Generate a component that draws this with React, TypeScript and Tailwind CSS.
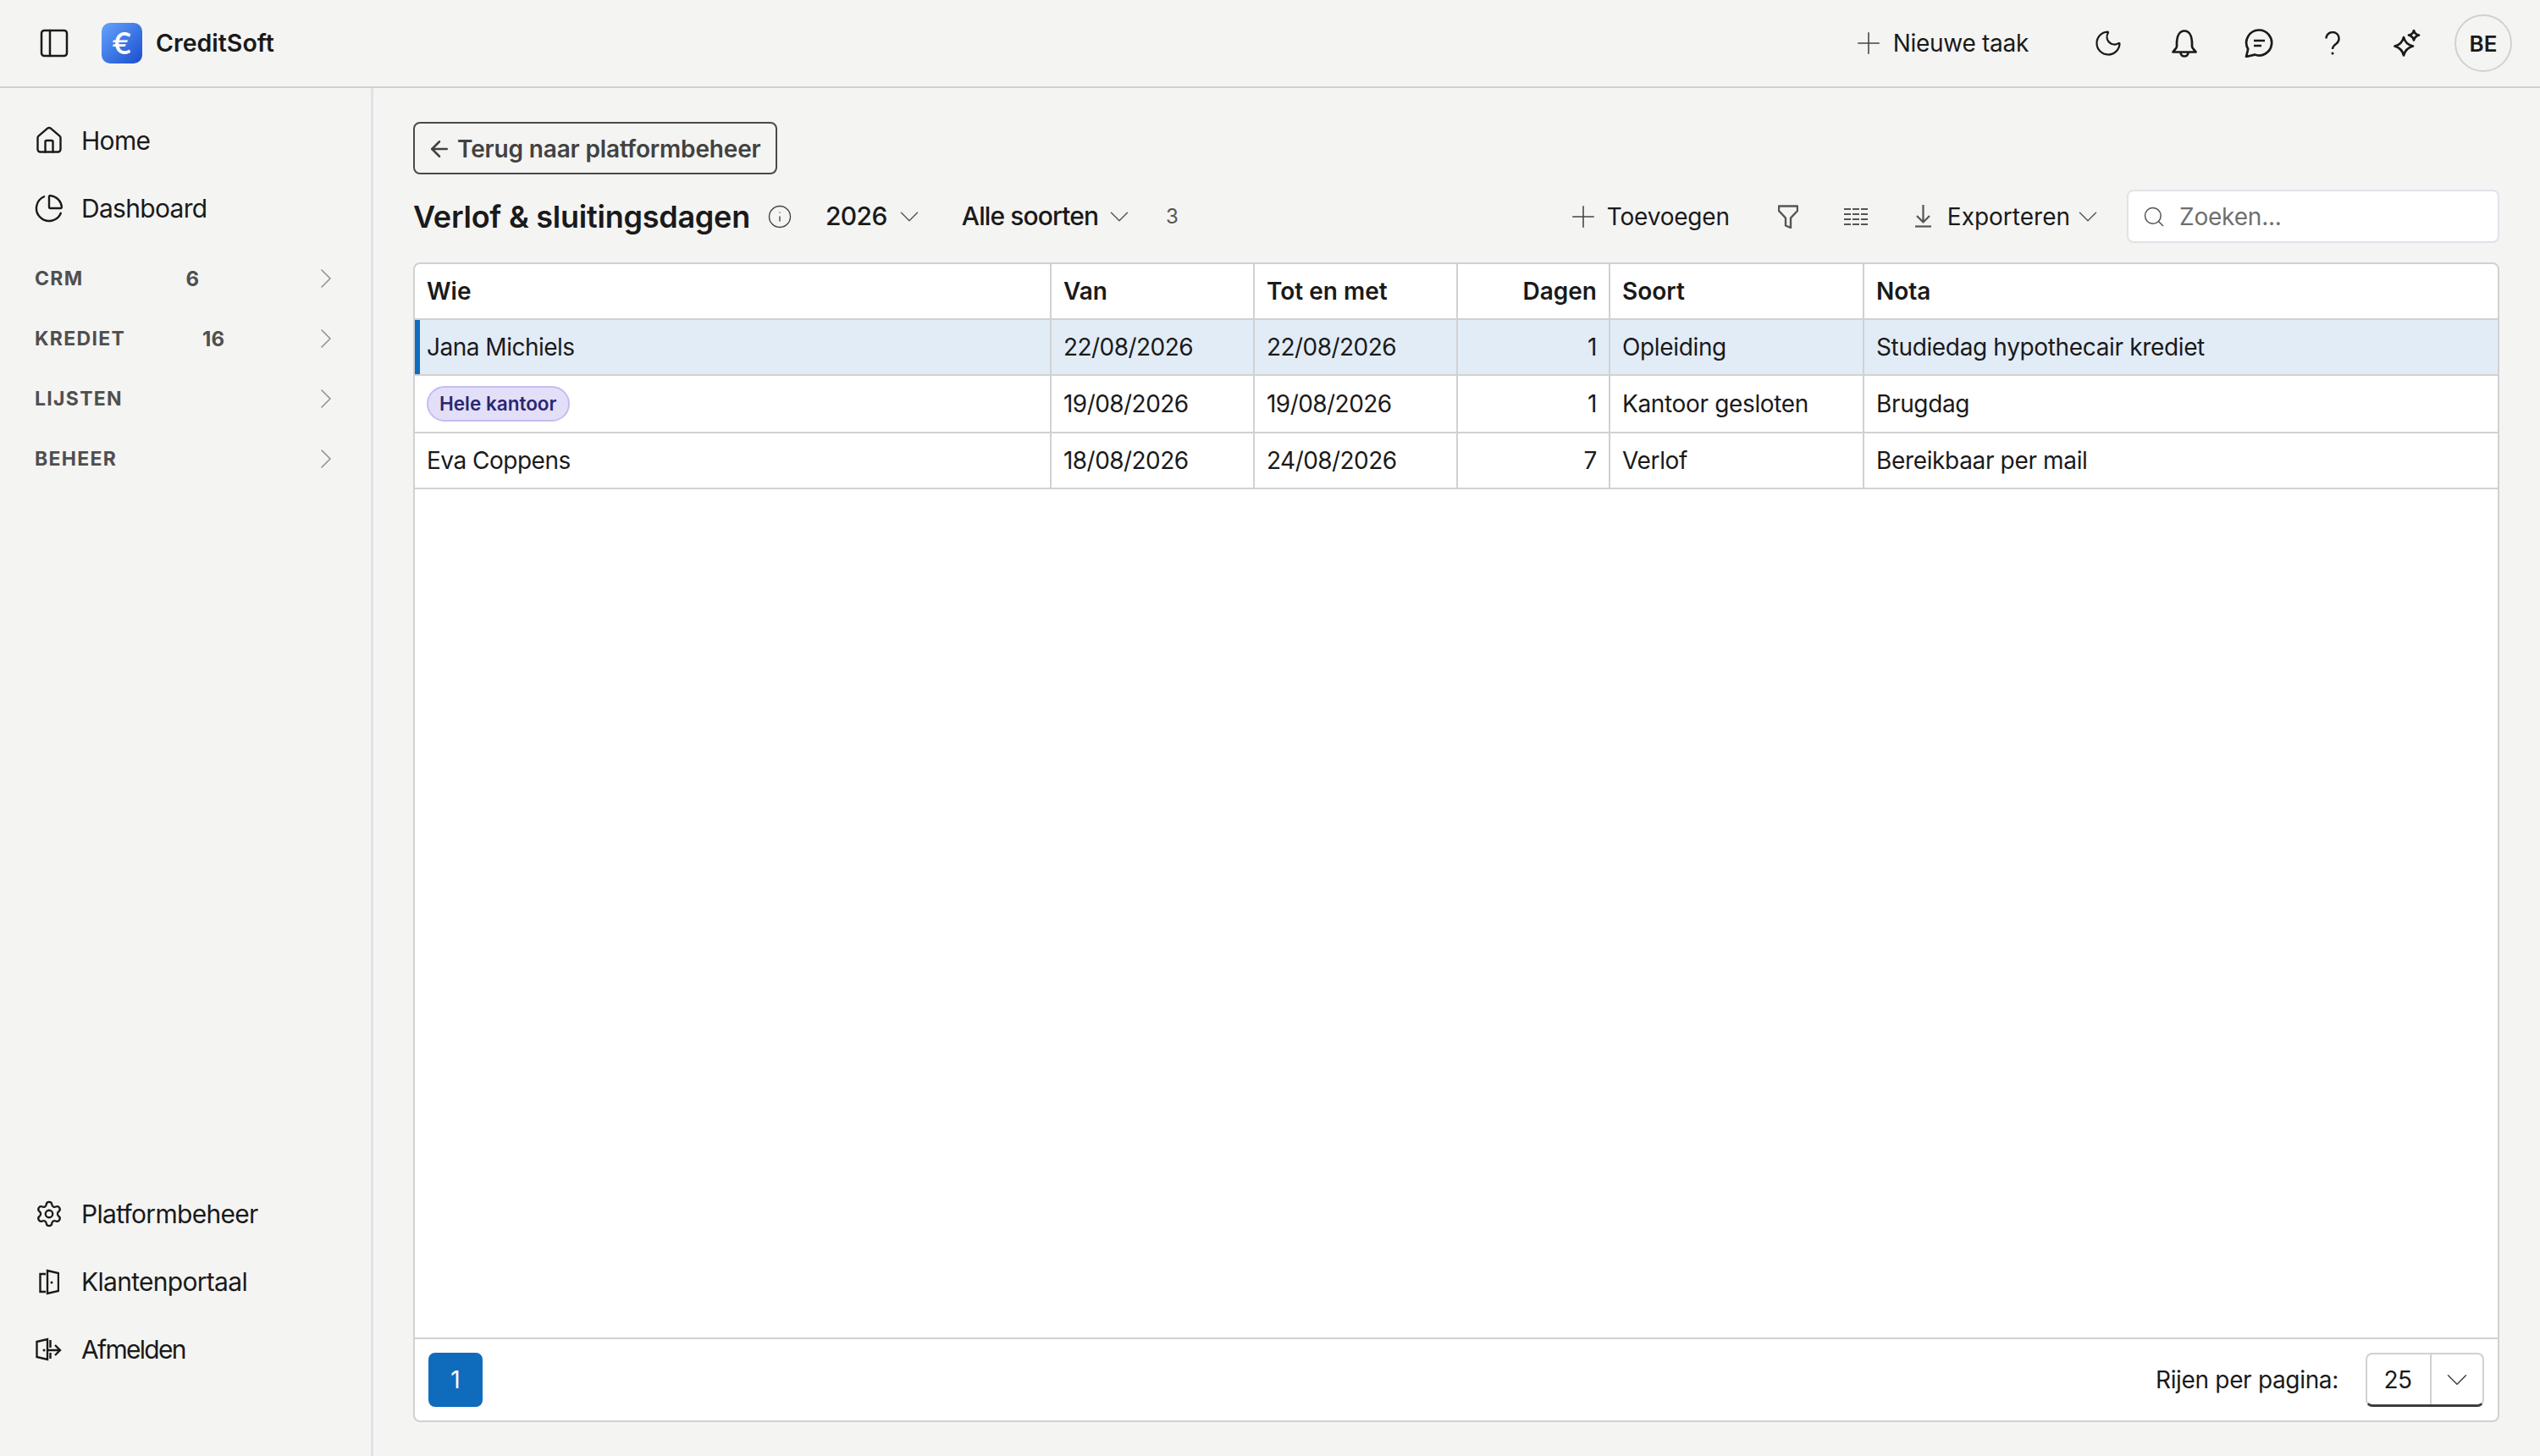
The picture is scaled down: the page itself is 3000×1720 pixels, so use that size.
import React from "react";
import {
  ArrowLeft,
  ChartPie,
  ChevronDown,
  ChevronRight,
  House,
  Info,
  Moon,
  PanelLeft,
  Plus,
  Search,
  Settings,
} from "lucide-react";

const ROWS = [
  { who: "Jana Michiels", from: "22/08/2026", to: "22/08/2026", days: 1, kind: "Opleiding", note: "Studiedag hypothecair krediet", height: "h-[66px]" },
  { who: null, from: "19/08/2026", to: "19/08/2026", days: 1, kind: "Kantoor gesloten", note: "Brugdag", height: "h-[68px]" },
  { who: "Eva Coppens", from: "18/08/2026", to: "24/08/2026", days: 7, kind: "Verlof", note: "Bereikbaar per mail", height: "h-[66px]" },
];

const GRID = "grid grid-cols-[752px_240px_240px_180px_300px_1fr]";

function BellIcon() {
  return (
    <svg width="30" height="33" viewBox="0 0 30 33" fill="none" stroke="#1a1a1a" strokeWidth="2.700" strokeLinejoin="round">
      <path d="M6 17C6 8 9 1.500 15 1.500S24 8 24 17v3c0 2 3 4 4.500 6.500h-27C3 24 6 22 6 20z" />
      <path d="M10.500 27a4.500 4.500 0 0 0 9 0" />
    </svg>
  );
}

function ChatIcon() {
  return (
    <svg width="34" height="34" viewBox="0 0 34 34" fill="none" stroke="#1a1a1a" strokeWidth="2.700" strokeLinejoin="round">
      <path d="M17 1.500a15 15 0 1 1-5 29.100L2 33l2.200-9A15 15 0 0 1 17 1.500z" />
      <path d="M11 14h13M11 20h9" />
    </svg>
  );
}

function HelpIcon() {
  return (
    <svg width="18" height="28" viewBox="0 0 18 28" fill="none" stroke="#1a1a1a" strokeWidth="2.400">
      <path d="M1.500 8.500a7.500 7.500 0 1 1 12 6c-2.800 2-4.500 3.500-4.500 6.500" />
      <circle cx="9" cy="26" r="1.600" fill="#1a1a1a" stroke="none" />
    </svg>
  );
}

function SparkleIcon() {
  return (
    <svg width="32" height="32" viewBox="0 0 32 32" fill="none" stroke="#1a1a1a" strokeWidth="2.700" strokeLinejoin="round">
      <path d="M12 9Q14 17.500 23 19.500 14 22 12 30.500 10 22 1.500 19.500 10 17.500 12 9z" />
      <path d="M24 1Q25 5.500 30 6.500 25 8 24 12.500 23 8 18 6.500 23 5.500 24 1z" />
    </svg>
  );
}

function FilterIcon() {
  return (
    <svg width="24" height="28" viewBox="0 0 24 28" fill="none" stroke="#555" strokeWidth="2.400" strokeLinejoin="round">
      <path d="M1 1.500h22V7l-8 8.500V27l-6-2.500v-9L1 7z" />
    </svg>
  );
}

function ColumnsIcon() {
  return (
    <svg width="28" height="24" viewBox="0 0 28 24" fill="none" stroke="#555" strokeWidth="2.200">
      {[3, 9, 15, 21].map((y) => (
        <path key={y} d={`M0 ${y}h28`} strokeDasharray="8 2" />
      ))}
    </svg>
  );
}

function DownloadIcon() {
  return (
    <svg width="19" height="27" viewBox="0 0 19 27" fill="none" stroke="#555" strokeWidth="2.200">
      <path d="M9.500 0v20M2 13l7.500 7.500L17 13" />
      <path d="M0 25.500h19" />
    </svg>
  );
}

function DoorIcon() {
  return (
    <svg width="24" height="31" viewBox="0 0 24 31" fill="none" stroke="#1a1a1a" strokeWidth="2.400">
      <path d="M8 6H1.500v21H8" />
      <path d="M10 2l13 3v21l-13 3z" />
      <circle cx="15" cy="16" r="1.500" fill="#1a1a1a" stroke="none" />
    </svg>
  );
}

function LogoutIcon() {
  return (
    <svg width="32" height="28" viewBox="0 0 32 28" fill="none" stroke="#1a1a1a" strokeWidth="2.400">
      <path d="M1.500 5L14 2v24L1.500 23z" />
      <path d="M17.500 3v9M17.500 18v7" />
      <path d="M14 15h15M23 9l6 6-6 6" />
      <circle cx="10" cy="15" r="1.500" fill="#1a1a1a" stroke="none" />
    </svg>
  );
}

function NavItem({ icon, label, tight }: { icon: React.ReactNode; label: string; tight?: boolean }) {
  return (
    <div className="flex h-[80px] items-center pl-[40px]">
      <span className="flex w-[36px] items-center justify-center">{icon}</span>
      <span className={`ml-[20px] text-[30px] text-[#1a1a1a] ${tight ? "tracking-[-1.700px]" : "tracking-[-0.7px]"}`}>{label}</span>
    </div>
  );
}

function NavGroup({ label, count }: { label: string; count?: number }) {
  return (
    <div className="flex h-[71px] w-[373px] items-center justify-between">
      <span className="pt-[2px] text-[23px] font-bold tracking-[1.300px] text-[#4f4f4f]">{label}</span>
      {count && <span className="pt-[2px] text-[24px] font-bold text-[#4f4f4f]">{count}</span>}
      <span className="flex w-[58px] justify-center">
        <ChevronRight size={40} strokeWidth={0.9} color="#8f8f8f" />
      </span>
    </div>
  );
}

function Cell({ children, right, last }: { children: React.ReactNode; right?: boolean; last?: boolean }) {
  return (
    <div className={`flex items-center pl-[14px] pr-[14px] ${right ? "justify-end" : ""} ${last ? "" : "border-r-2 border-[#d1d1d1]"}`}>
      {children}
    </div>
  );
}

export default function App() {
  return (
    <div className="flex h-[1720px] w-[3000px] flex-col bg-[#f4f4f3] font-['Inter',sans-serif] text-[#1a1a1a]">
      {/* Topbar */}
      <header className="flex h-[104px] shrink-0 items-center border-b-2 border-[#d1d1d1] pl-[44px] pr-[33px]">
        <PanelLeft size={40} strokeWidth={1.500} color="#1a1a1a" />
        <div className="ml-[36px] flex h-[48px] w-[48px] items-center justify-center rounded-[10px] bg-gradient-to-br from-[#66a3fb] to-[#1c4ccf] text-[36px] font-medium leading-none text-white">
          €
        </div>
        <span className="ml-[16px] text-[28.500px] font-semibold">CreditSoft</span>

        <div className="ml-auto flex items-center">
          <Plus size={42} strokeWidth={0.9} color="#444" />
          <span className="ml-[8px] text-[28px] tracking-[-0.3px]">Nieuwe taak</span>
          <span className="ml-[76px] flex w-[36px] justify-center"><Moon size={40} strokeWidth={1.500} /></span>
          <span className="ml-[54px] flex w-[36px] justify-center"><BellIcon /></span>
          <span className="ml-[52px] flex w-[36px] justify-center"><ChatIcon /></span>
          <span className="ml-[51px] flex w-[36px] justify-center"><HelpIcon /></span>
          <span className="ml-[52px] flex w-[36px] justify-center"><SparkleIcon /></span>
          <span className="ml-[38px] flex h-[68px] w-[68px] items-center justify-center rounded-full border-2 border-[#d1d1d1] text-[26px] font-semibold">
            BE
          </span>
        </div>
      </header>

      <div className="flex min-h-0 flex-1">
        {/* Sidebar */}
        <aside className="flex w-[441px] shrink-0 flex-col justify-between border-r-[3px] border-[#e0e3e6] pb-[86px] pt-[22px]">
          <div>
            <NavItem icon={<House size={36} strokeWidth={1.600} />} label="Home" />
            <NavItem icon={<ChartPie size={36} strokeWidth={1.600} />} label="Dashboard" />
            <div className="ml-[41px] mt-[7px]">
              <NavGroup label="CRM" count={6} />
              <NavGroup label="KREDIET" count={16} />
              <NavGroup label="LIJSTEN" />
              <NavGroup label="BEHEER" />
            </div>
          </div>
          <div>
            <NavItem icon={<Settings size={34} strokeWidth={1.600} />} label="Platformbeheer" />
            <NavItem icon={<DoorIcon />} label="Klantenportaal" />
            <NavItem icon={<LogoutIcon />} label="Afmelden" tight />
          </div>
        </aside>

        {/* Content */}
        <main className="flex min-w-0 flex-1 flex-col pb-[40px] pl-[47px] pr-[48px] pt-[40px]">
          <button className="flex h-[62px] w-[430px] items-center gap-[6px] rounded-[8px] border-2 border-[#4a4a4a] pl-[14px] pt-px text-[28px] font-semibold tracking-[-0.15px] text-[#424242]">
            <ArrowLeft size={30} strokeWidth={2} />
            Terug naar platformbeheer
          </button>

          <div className="mt-[18px] flex h-[63px] items-center">
            <h1 className="text-[36px] font-semibold tracking-[-0.25px]">Verlof &amp; sluitingsdagen</h1>
            <Info size={30} strokeWidth={1.100} color="#444" className="ml-[20px]" />
            <span className="ml-[39px] text-[30px] font-medium tracking-[-0.6px]">2026</span>
            <ChevronDown size={38} strokeWidth={0.9} color="#555" className="ml-[7px]" />
            <span className="ml-[43px] text-[30px] font-medium tracking-[-0.9px]">Alle soorten</span>
            <ChevronDown size={38} strokeWidth={0.9} color="#555" className="ml-[6px]" />
            <span className="ml-[36px] text-[24px] text-[#555]">3</span>

            <div className="ml-auto flex items-center">
              <Plus size={42} strokeWidth={0.9} color="#444" />
              <span className="ml-[7px] text-[28px] tracking-[-0.2px]">Toevoegen</span>
              <span className="ml-[57px] flex"><FilterIcon /></span>
              <span className="ml-[54px] flex"><ColumnsIcon /></span>
              <span className="ml-[56px] flex"><DownloadIcon /></span>
              <span className="ml-[19px] text-[28px]">Exporteren</span>
              <ChevronDown size={38} strokeWidth={0.9} color="#555" className="ml-[2px]" />
              <div className="ml-[27px] flex h-[63px] w-[440px] items-center rounded-[8px] border-2 border-[#e0e3e6] bg-white pl-[16px]">
                <Search size={28} strokeWidth={1.300} color="#555" />
                <span className="ml-[16px] text-[28px] tracking-[-0.2px] text-[#6f6f6f]">Zoeken...</span>
              </div>
            </div>
          </div>

          {/* Tabel */}
          <div className="mt-[23px] flex min-h-0 flex-1 flex-col rounded-[8px] border-2 border-[#d1d1d1] bg-white">
            <div className={`${GRID} h-[66px] border-b-2 border-[#d1d1d1] text-[28px] font-semibold`}>
              <Cell>Wie</Cell>
              <Cell>Van</Cell>
              <Cell>Tot en met</Cell>
              <Cell right>Dagen</Cell>
              <Cell>Soort</Cell>
              <Cell last>Nota</Cell>
            </div>
            {ROWS.map((row, i) => (
              <div
                key={row.from + row.kind}
                className={`${GRID} ${row.height} border-b-2 border-[#d1d1d1] text-[28px] tracking-[-0.35px] ${i === 0 ? "bg-[#e2ecf7] shadow-[inset_6px_0_0_#0f6cbd]" : ""}`}
              >
                <Cell>
                  {row.who ? (
                    <span className="tracking-[-0.5px]">{row.who}</span>
                  ) : (
                    <span className="flex h-[42px] items-center rounded-full border-2 border-[#c3bdf0] bg-[#e3dff9] px-[13px] text-[22.5px] font-semibold tracking-normal text-[#2b2670]">
                      Hele kantoor
                    </span>
                  )}
                </Cell>
                <Cell><span className="tracking-[-0.55px]">{row.from}</span></Cell>
                <Cell><span className="tracking-[-0.55px]">{row.to}</span></Cell>
                <Cell right>{row.days}</Cell>
                <Cell>{row.kind}</Cell>
                <Cell last>{row.note}</Cell>
              </div>
            ))}
            <div className="flex-1" />
            <div className="flex h-[98px] items-center justify-between border-t-2 border-[#d1d1d1] pl-[16px] pr-[16px]">
              <span className="flex h-[64px] w-[64px] items-center justify-center rounded-[8px] bg-[#0f6cbd] text-[28px] text-white">1</span>
              <div className="flex items-center">
                <span className="text-[28px] tracking-[-0.33px]">Rijen per pagina:</span>
                <div className="ml-[32px] flex h-[64px] w-[140px] items-stretch rounded-[8px] border-2 border-b-[3px] border-[#d1d1d1] border-b-[#3d3d3d]">
                  <span className="flex w-[76px] items-center justify-center border-r-2 border-[#d1d1d1] pr-[2px] text-[28px] tracking-[-0.5px]">25</span>
                  <span className="flex flex-1 items-center justify-center">
                    <ChevronDown size={42} strokeWidth={0.9} color="#444" />
                  </span>
                </div>
              </div>
            </div>
          </div>
        </main>
      </div>
    </div>
  );
}
